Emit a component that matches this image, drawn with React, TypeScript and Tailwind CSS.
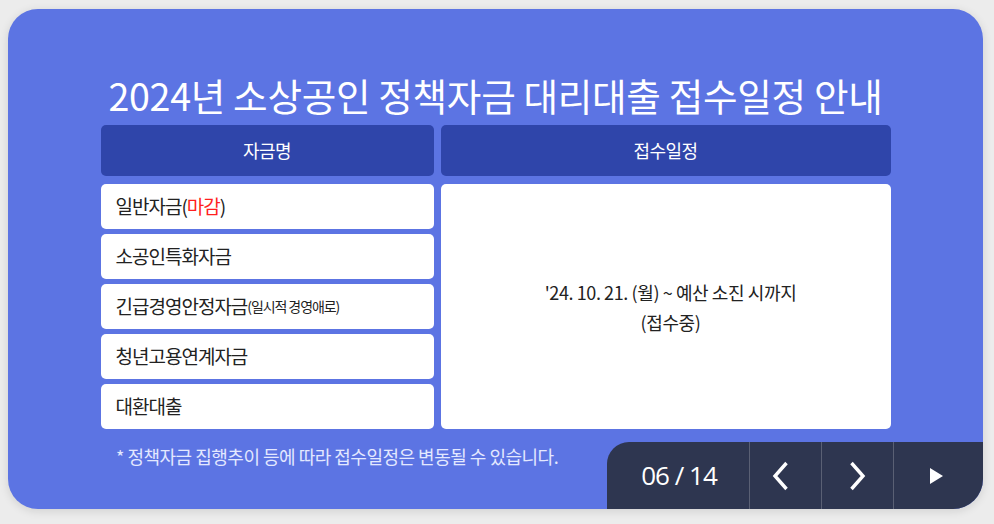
import React from 'react';

const funds = [
  { name: '일반자금', extra: <>(<span className="text-[#ff1f1f]">마감</span>)</> },
  { name: '소공인특화자금' },
  { name: '긴급경영안정자금', small: '(일시적 경영애로)' },
  { name: '청년고용연계자금' },
  { name: '대환대출' },
];

const kr = { fontFamily: '"Noto Sans CJK KR", "Noto Sans", sans-serif' };

const App: React.FC = () => {
  return (
    <div className="w-[994px] h-[524px] bg-[#ececec] pt-[9px] pl-[8px]" style={kr}>
      <div className="relative w-[975px] h-[500px] rounded-[30px] bg-[#5c74e3] shadow-[0_2px_10px_rgba(0,0,0,0.12)] overflow-hidden">
        <div className="flex flex-col items-center pt-[63px]">
          <h1 className="text-[37.6px] leading-[46px] font-normal text-white tracking-[-0.3px]">
            2024년 소상공인 정책자금 대리대출 접수일정 안내
          </h1>

          <div className="mt-[7px] w-[790px] grid grid-cols-[333px_450px] gap-x-[7px]">
            <div className="h-[51px] rounded-[5px] bg-[#2f45aa] flex items-center justify-center text-white text-[18px] tracking-[-0.5px]">
              자금명
            </div>
            <div className="h-[51px] rounded-[5px] bg-[#2f45aa] flex items-center justify-center text-white text-[18px] tracking-[-0.5px]">
              접수일정
            </div>

            <div className="mt-[8px] flex flex-col gap-[5px]">
              {funds.map((f) => (
                <div
                  key={f.name}
                  className="h-[45px] rounded-[5px] bg-white flex items-center pl-[15px] text-[19px] text-[#222] tracking-[-1px]"
                >
                  {f.name}
                  {f.extra}
                  {f.small && <span className="text-[14px] tracking-[-1.1px]">{f.small}</span>}
                </div>
              ))}
            </div>
            <div className="mt-[8px] rounded-[5px] bg-white flex flex-col items-center justify-center text-[18px] leading-[30px] text-[#222] tracking-[-0.4px] pl-[10px]">
              <span>'24. 10. 21. (월) ~ 예산 소진 시까지</span>
              <span>(접수중)</span>
            </div>
          </div>

          <p className="self-start ml-[108px] mt-[14px] text-[18px] text-[#e3e8ff] tracking-[-0.5px]">
            * 정책자금 집행추이 등에 따라 접수일정은 변동될 수 있습니다.
          </p>
        </div>

        {/* pager overlay */}
        <div className="absolute right-0 bottom-0 w-[376px] h-[67px] rounded-tl-[22px] bg-[#2e3650] flex text-white">
          <div
            className="w-[142px] flex items-center justify-center pl-[2px] text-[26px] tracking-[-1px]"
            style={{ fontFamily: '"Open Sans", sans-serif' }}
          >
            06 / 14
          </div>
          <button className="w-[72px] border-l border-[#5a6074] flex items-center justify-center pr-[10px]">
            <svg width="17" height="30" viewBox="0 0 17 30" fill="none" stroke="white" strokeWidth="3.4">
              <path d="M14.5 2 L3 15 L14.5 28" />
            </svg>
          </button>
          <button className="w-[72px] border-l border-[#5a6074] flex items-center justify-center">
            <svg width="17" height="30" viewBox="0 0 17 30" fill="none" stroke="white" strokeWidth="3.4">
              <path d="M2.5 2 L14 15 L2.5 28" />
            </svg>
          </button>
          <button className="flex-1 border-l border-[#5a6074] flex items-center justify-center pr-[4px]">
            <svg width="13" height="16" viewBox="0 0 13 16" fill="white">
              <path d="M0 0 L13 8 L0 16 Z" />
            </svg>
          </button>
        </div>
      </div>
    </div>
  );
};

export default App;
